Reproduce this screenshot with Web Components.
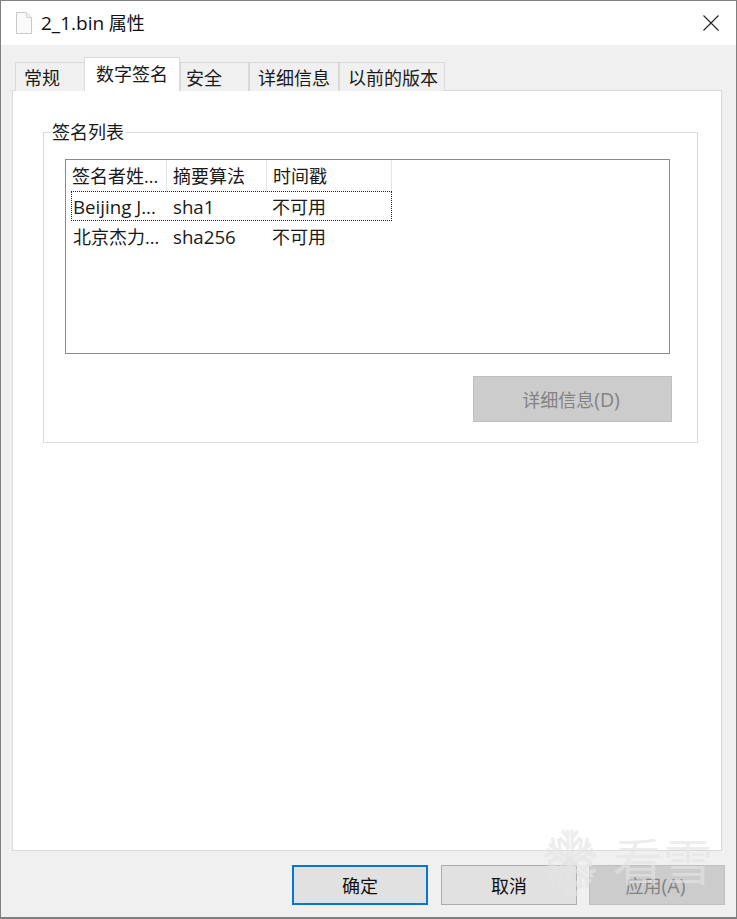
<!DOCTYPE html>
<html>
<head>
<meta charset="utf-8">
<style>
  html, body { margin: 0; padding: 0; background: #f0f0f0; }
  body { font: 18px "Open Sans", "Noto Sans CJK SC", sans-serif; color: #1a1a1a; }
  .wide { font-size: 19.5px; }
</style>
</head>
<body>
<prop-dialog>
  <title-bar slot="title" name="2_1.bin" text="属性"></title-bar>
  <tab-strip slot="tabs">
    <prop-tab w="70" pad="8" style="margin-left:2px">常规</prop-tab>
    <prop-tab w="96" pad="11" active>数字签名</prop-tab>
    <prop-tab w="69" pad="5">安全</prop-tab>
    <prop-tab w="90" pad="8">详细信息</prop-tab>
    <prop-tab w="106" pad="8">以前的版本</prop-tab>
  </tab-strip>
  <group-box slot="panel" label="签名列表">
    <sig-list></sig-list>
    <flat-button class="details" disabled w="199" h="46">详细信息<span class="wide">(D)</span></flat-button>
  </group-box>
  <flat-button slot="buttons" primary w="136" h="40">确定</flat-button>
  <flat-button slot="buttons" w="136" h="40">取消</flat-button>
  <flat-button slot="buttons" disabled w="136" h="40">应用<span class="wide">(A)</span></flat-button>
  <snow-mark slot="mark"></snow-mark>
</prop-dialog>

<script>
class PropDialog extends HTMLElement {
  connectedCallback() {
    this.attachShadow({ mode: 'open' });
    this.shadowRoot.innerHTML = `
      <style>
        :host { display: flex; flex-direction: column; position: relative; box-sizing: border-box;
                width: 737px; height: 919px; border: 1px solid #7f7f7f; border-bottom-width: 2px;
                background: #f0f0f0; overflow: hidden; }
        .tabs { padding: 12px 0 0 12px; flex: none; }
        .panel { box-sizing: border-box; margin: -1px 14px 0 11px; flex: 1; background: #fff;
                 border: 1px solid #d9d9d9; padding: 41px 23px 0 30px; }
        .buttons { display: flex; gap: 13px; justify-content: flex-end; padding: 14px 11px 12px 0; flex: none; }
        ::slotted(flat-button:last-of-type) { margin-left: -1px; }
      </style>
      <slot name="title"></slot>
      <div class="tabs"><slot name="tabs"></slot></div>
      <div class="panel"><slot name="panel"></slot></div>
      <div class="buttons"><slot name="buttons"></slot></div>
      <slot name="mark"></slot>`;
  }
}

class TitleBar extends HTMLElement {
  connectedCallback() {
    this.attachShadow({ mode: 'open' });
    this.shadowRoot.innerHTML = `
      <style>
        :host { display: flex; align-items: center; height: 44px; background: #fff; flex: none; padding: 0 17px 0 15px; font-size: 18px; color: #111; }
        .file { margin-right: 9px; flex: none; }
        .text { flex: 1; margin-top: -2px; }
        .latin { font-size: 19px; }
        .close { flex: none; margin-top: -1px; }
      </style>
      <svg class="file" width="16" height="22" viewBox="0 0 16 22">
        <path d="M.5.5H10.5L15.5 5.5V21.5H.5Z" fill="#fafafa" stroke="#c9c9c9"/>
        <path d="M10.5.5V5.5H15.5" fill="#f0f0f0" stroke="#d4d4d4"/>
      </svg>
      <span class="text"><span class="latin">${this.getAttribute('name')}</span> ${this.getAttribute('text')}</span>
      <svg class="close" width="16" height="16" viewBox="0 0 16 16">
        <path d="M.5.5L15.5 15.5M15.5.5L.5 15.5" stroke="#222" stroke-width="1.1" fill="none"/>
      </svg>`;
  }
}

class TabStrip extends HTMLElement {
  connectedCallback() {
    this.attachShadow({ mode: 'open' });
    this.shadowRoot.innerHTML = `
      <style>:host { display: flex; align-items: flex-end; height: 34px; position: relative; z-index: 2; }</style>
      <slot></slot>`;
  }
}

class PropTab extends HTMLElement {
  connectedCallback() {
    this.attachShadow({ mode: 'open' });
    const active = this.hasAttribute('active');
    this.shadowRoot.innerHTML = `
      <style>
        :host { display: block; box-sizing: border-box; width: ${this.getAttribute('w')}px; flex: none;
                height: ${active ? 34 : 29}px; border: 1px solid #d9d9d9; border-bottom: 0;
                background: ${active ? '#fff' : '#f0f0f0'}; margin-left: ${active ? -1 : 0}px;
                line-height: ${active ? 33 : 31}px; font-size: 18px; white-space: nowrap;
                padding-left: ${this.getAttribute('pad')}px; }
      </style>
      <slot></slot>`;
  }
}

class GroupBox extends HTMLElement {
  connectedCallback() {
    this.attachShadow({ mode: 'open' });
    this.shadowRoot.innerHTML = `
      <style>
        :host { display: block; box-sizing: border-box; height: 311px; border: 1px solid #dcdcdc; position: relative; padding: 26px 0 0 21px; }
        .legend { position: absolute; left: 7px; top: -13px; background: #fff; padding: 0 1px; line-height: 24px; font-size: 18px; }
        ::slotted(.details) { margin: 22px 0 0 408px; }
      </style>
      <span class="legend">${this.getAttribute('label')}</span>
      <slot></slot>`;
  }
}

class SigList extends HTMLElement {
  connectedCallback() {
    this.attachShadow({ mode: 'open' });
    const rows = [['Beijing J...', 'sha1', '不可用'], ['北京杰力...', 'sha256', '不可用']];
    this.shadowRoot.innerHTML = `
      <style>
        :host { display: block; box-sizing: border-box; width: 605px; height: 195px; border: 1px solid #8a8a8a; background: #fff; font-size: 18px; }
        .row { display: grid; white-space: nowrap; box-sizing: border-box; height: 30px; line-height: 32px; }
        .head { grid-template-columns: 101px 100px 125px; width: 326px; }
        .head span { padding-left: 6px; border-right: 1px solid #e5e5e5; box-sizing: border-box; }
        .rows { margin: 1px 0 0 5px; width: 321px; }
        .body { grid-template-columns: 96px 100px 125px; width: 321px; }
        .body span { padding-left: 6px; box-sizing: border-box; overflow: hidden; }
        .body span:first-child { padding-left: 2px; }
        .body span:last-child { padding-left: 5px; }
        .body span.latin { font-size: 18.7px; }
        .focus { outline: 1px dotted #222; outline-offset: -1px; }
      </style>
      <div class="row head"><span>签名者姓...</span><span>摘要算法</span><span>时间戳</span></div>
      <div class="rows">
        ${rows.map((r, i) => `<div class="row body ${i === 0 ? 'focus' : ''}">${r.map(c =>
          `<span class="${/^[A-Za-z]/.test(c) ? 'latin' : ''}">${c}</span>`).join('')}</div>`).join('')}
      </div>`;
  }
}

class FlatButton extends HTMLElement {
  connectedCallback() {
    this.attachShadow({ mode: 'open' });
    const disabled = this.hasAttribute('disabled');
    const primary = this.hasAttribute('primary');
    this.shadowRoot.innerHTML = `
      <style>
        :host { display: flex; align-items: center; justify-content: center; box-sizing: border-box; flex: none;
                width: ${this.getAttribute('w')}px; height: ${this.getAttribute('h')}px; font-size: 18px;
                padding-right: ${disabled ? 3 : 0}px;
                border: ${primary ? '2px solid #0078d7' : '1px solid ' + (disabled ? '#bfbfbf' : '#adadad')};
                background: ${disabled ? '#cccccc' : '#e1e1e1'}; color: ${disabled ? '#838383' : '#111'}; }
      </style>
      <slot></slot>`;
  }
}

// watermark lies over the corner of the dialog
class SnowMark extends HTMLElement {
  connectedCallback() {
    this.attachShadow({ mode: 'open' });
    const arm = `<path d="M46 50V3M54 50V3M46 14l-11-10M54 14l11-10M46 28l-15-14M54 28l15-14"/>`;
    const arms = [0, 60, 120, 180, 240, 300].map(a => `<g transform="rotate(${a} 50 50)">${arm}</g>`).join('');
    this.shadowRoot.innerHTML = `
      <style>
        :host { position: absolute; left: 542px; top: 827px; display: flex; align-items: flex-start; gap: 16px; pointer-events: none; color: rgba(228,228,228,.65); }
        svg { width: 54px; height: 70px; flex: none; }
        span { display: block; font: 400 50px/58px "Noto Sans CJK SC", sans-serif; margin-top: 2px; }
      </style>
      <svg viewBox="0 0 100 100" preserveAspectRatio="none" fill="none" stroke="currentColor" stroke-width="6">${arms}</svg>
      <span>看雪</span>`;
  }
}

customElements.define('prop-dialog', PropDialog);
customElements.define('title-bar', TitleBar);
customElements.define('tab-strip', TabStrip);
customElements.define('prop-tab', PropTab);
customElements.define('group-box', GroupBox);
customElements.define('sig-list', SigList);
customElements.define('flat-button', FlatButton);
customElements.define('snow-mark', SnowMark);
</script>
</body>
</html>
